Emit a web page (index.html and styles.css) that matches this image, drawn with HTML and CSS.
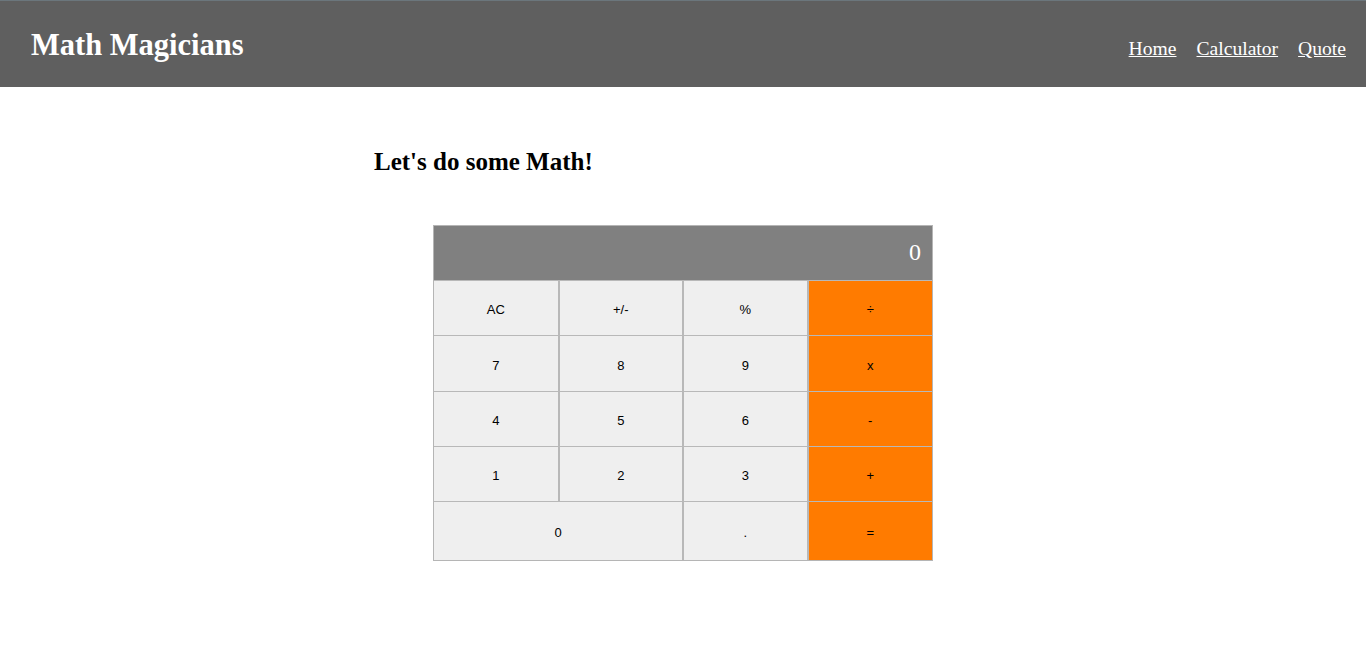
FILE: index.html
```html
<!DOCTYPE html>
<html lang="en">
<head>
<meta charset="utf-8">
<title>Math Magicians</title>
<link rel="stylesheet" href="styles.css">
</head>
<body>
<header class="topbar">
  <h1 class="brand">Math Magicians</h1>
  <nav class="nav">
    <a href="#">Home</a>
    <a href="#">Calculator</a>
    <a href="#">Quote</a>
  </nav>
</header>
<main class="page">
  <h2 class="heading">Let's do some Math!</h2>
  <div class="calc">
    <div class="display">0</div>
    <div class="keys">
      <button class="key">AC</button>
      <button class="key">+/-</button>
      <button class="key">%</button>
      <button class="key op">÷</button>
      <button class="key">7</button>
      <button class="key">8</button>
      <button class="key">9</button>
      <button class="key op">x</button>
      <button class="key">4</button>
      <button class="key">5</button>
      <button class="key">6</button>
      <button class="key op">-</button>
      <button class="key">1</button>
      <button class="key">2</button>
      <button class="key">3</button>
      <button class="key op">+</button>
      <button class="key zero">0</button>
      <button class="key dot">.</button>
      <button class="key op">=</button>
    </div>
  </div>
</main>
</body>
</html>
```
FILE: styles.css
```css
* { box-sizing: border-box; }
body {
  margin: 0;
  font-family: "Liberation Serif", serif;
  background: #fff;
}
.topbar {
  height: 87px;
  background: #5f5f5f;
  border-top: 1px solid #6b767c;
  display: flex;
  align-items: center;
  justify-content: space-between;
  padding: 0 20px 0 31px;
}
.brand {
  margin: 0;
  color: #fff;
  font-size: 30.5px;
  font-weight: bold;
  position: relative;
  top: 1px;
}
.nav {
  display: flex;
  gap: 20px;
  position: relative;
  top: 5px;
}
.nav a {
  color: #fff;
  font-size: 19.6px;
  text-decoration: underline;
}
.page {
  width: 618px;
  margin: 0 auto;
  padding-top: 60px;
}
.heading {
  margin: 0 0 48px;
  font-size: 25px;
  font-weight: bold;
  color: #000;
  line-height: 30px;
}
.calc {
  width: 500px;
  margin: 0 auto;
  border: 1px solid #b5b5b5;
}
.display {
  height: 54px;
  background: #808080;
  color: #fff;
  font-size: 24px;
  text-align: right;
  padding: 11px 11px 0 0;
  line-height: 30px;
}
.keys {
  display: grid;
  grid-template-columns: repeat(4, 1fr);
  grid-template-rows: 55px 56px 55px 55px 59px;
}
.key {
  font-family: "Liberation Sans", Arial, sans-serif;
  font-size: 13px;
  color: #000;
  background: #efefef;
  border: 0;
  border-top: 1px solid #b8b8b8;
  border-left: 1px solid #b8b8b8;
  border-right: 1px solid #b8b8b8;
  padding: 3px 0 0;
  margin: 0;
}
.key:nth-child(4n+1) { border-left: 0; }
.key.op { background: #ff7b00; border-right: 0; }
.key.zero { grid-column: span 2; border-left: 0; }
.key.dot { border-left: 1px solid #b8b8b8; }
```
